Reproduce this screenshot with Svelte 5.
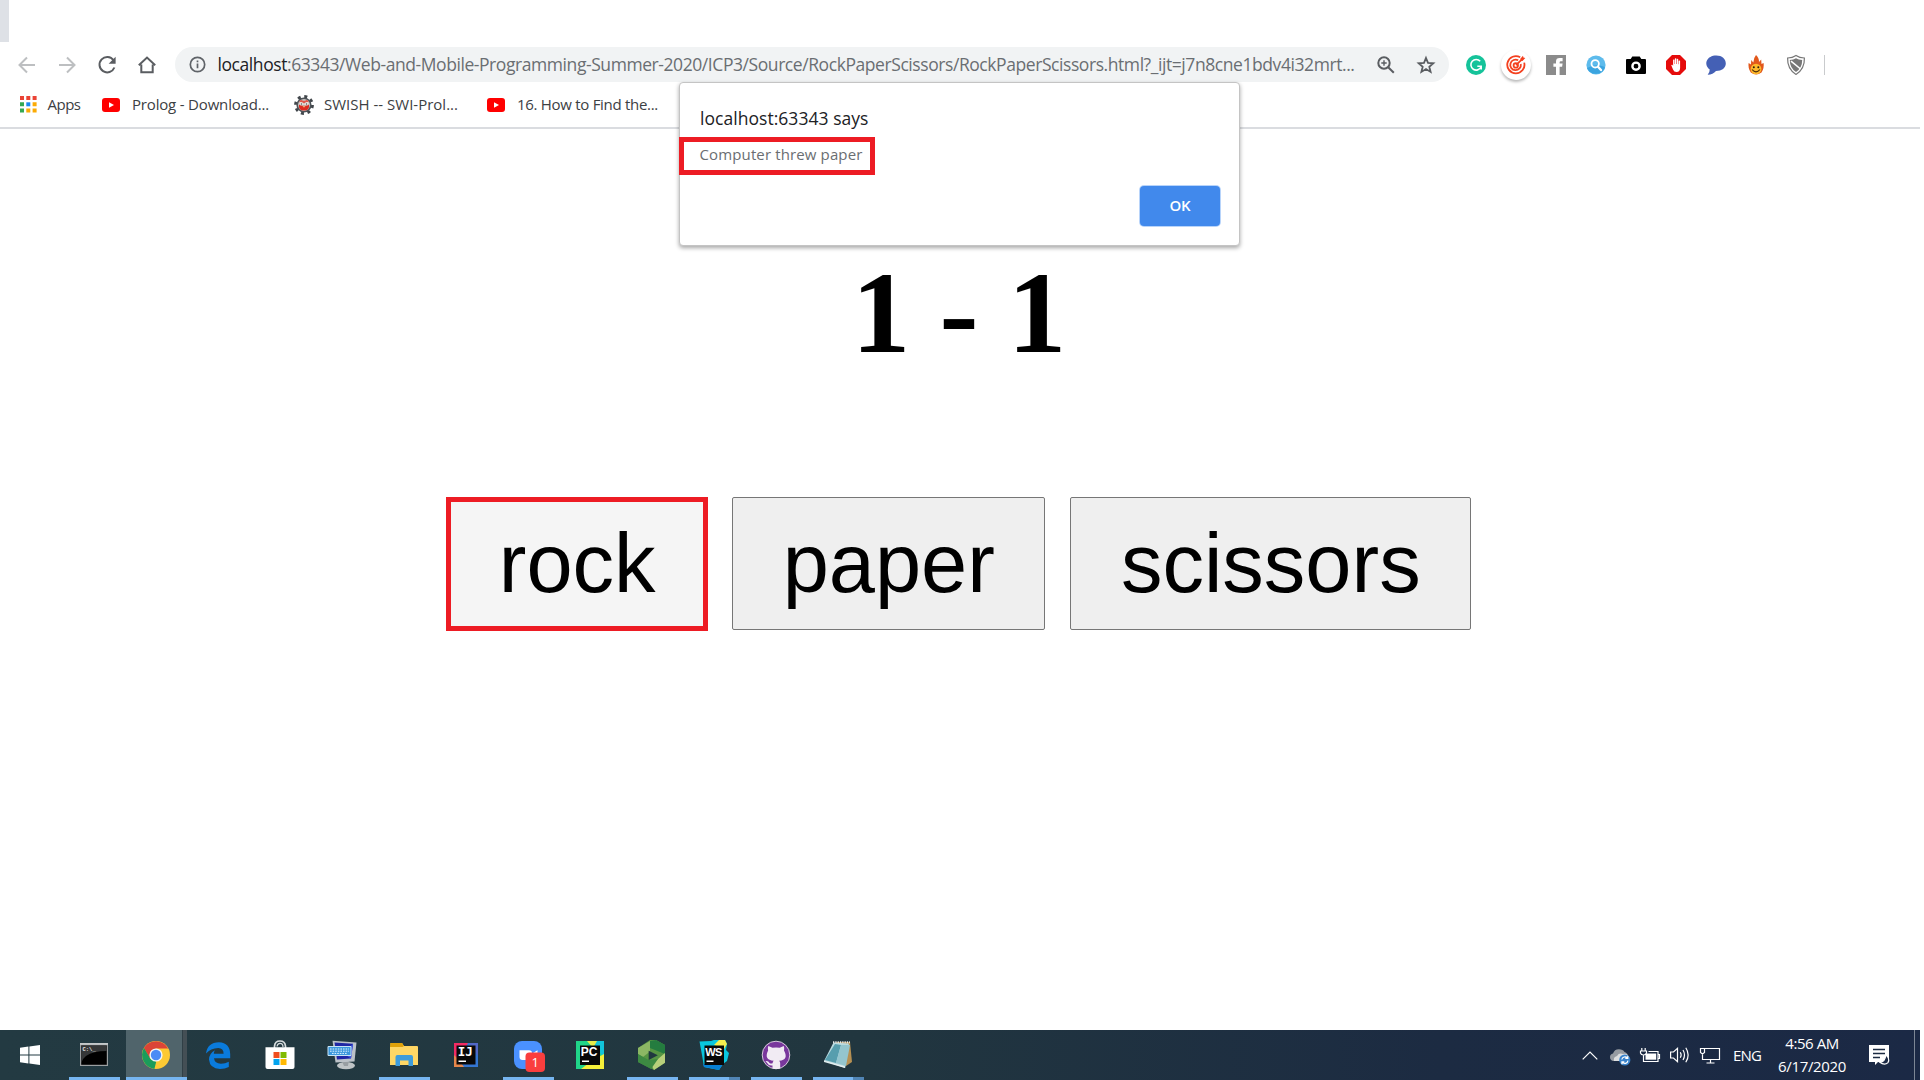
<script>
  const bookmarks = [
    { icon: 'apps', label: 'Apps', width: 33, slot: 82.5, gap: 11 },
    { icon: 'youtube', label: 'Prolog - Download...', width: 137, slot: 192, gap: 12 },
    { icon: 'swish', label: 'SWISH -- SWI-Prol...', width: 134, slot: 193, gap: 10 },
    { icon: 'youtube', label: '16. How to Find the...', width: 141, slot: 191.5, gap: 12 }
  ];
  const extensions = ['grammarly', 'target', 'facebook', 'search', 'camera', 'block', 'chat', 'flame', 'shield'];
  const tasks = [
    { icon: 'cmd', state: 'open' },
    { icon: 'chrome', state: 'active' },
    { icon: 'edge', state: '' },
    { icon: 'store', state: '' },
    { icon: 'remote', state: '' },
    { icon: 'folder', state: 'open' },
    { icon: 'intellij', state: '' },
    { icon: 'zoom', state: 'open' },
    { icon: 'pycharm', state: '' },
    { icon: 'hex', state: 'open' },
    { icon: 'webstorm', state: 'stacked' },
    { icon: 'github', state: 'open' },
    { icon: 'notepad', state: 'stacked' }
  ];

  // Tracks a label out or in so that it fills the given width.
  function fit(node, width) {
    const natural = node.getBoundingClientRect().width;
    const count = node.textContent.length;
    node.style.letterSpacing = `${(width - natural) / count}px`;
  }
</script>

{#snippet extension(name)}
  <svg class="ext" class:raised={name === 'target'} viewBox="0 0 20 20">
    {#if name === 'grammarly'}
      <circle cx="10" cy="10" r="10" fill="#15c39a" />
      <path d="M14.2 6.3A5.3 5.3 0 1 0 15 12M15.2 14.5V11.2H11.3" fill="none" stroke="#fff" stroke-width="1.6" />
    {:else if name === 'target'}
      <g fill="none" stroke="#f4401f" stroke-width="1.8">
        <path d="M14.2 2.3A8.6 8.6 0 1 0 18.2 7.6" />
        <path d="M12.2 5.3A5.3 5.3 0 1 0 14.8 9" />
        <circle cx="9.8" cy="10.4" r="2.2" />
        <path d="M10 10.2L17 3.4" />
      </g>
      <path d="M14.3 3.8L17 .8L17.4 2.6L19.3 3L16.5 6L14.6 5.6Z" fill="#f4401f" />
    {:else if name === 'facebook'}
      <path d="M0 0H20V20H0Z" fill="#8b8b8b" />
      <path d="M10 20V11.8H7.4V8.5H10V6.4Q10 3 13.6 3H16.6V6.2H14.8Q13.6 6.2 13.6 7.4V8.5H16.6L16.1 11.8H13.6V20Z" fill="#fff" />
    {:else if name === 'search'}
      <circle cx="10" cy="10" r="9.6" fill="#5dbbec" />
      <path d="M1 13Q10 8 19 12A9.6 9.6 0 0 1 1 13" fill="#3ba4df" />
      <circle cx="9.2" cy="8.8" r="3.7" fill="none" stroke="#fff" stroke-width="1.8" />
      <path d="M12 11.8L15 15" stroke="#fff" stroke-width="2.4" stroke-linecap="round" />
    {:else if name === 'camera'}
      <path d="M1 4H4.7L6.3 1.5H13.7L15.3 4H19Q20 4 20 5V18Q20 19 19 19H1Q0 19 0 18V5Q0 4 1 4Z" fill="#000" />
      <circle cx="10" cy="11.2" r="3.6" fill="none" stroke="#fff" stroke-width="2.4" />
    {:else if name === 'block'}
      <path d="M6 0H14L20 6V14L14 20H6L0 14V6Z" fill="#e50b0b" />
      <path d="M5.2 10L6.4 9.8L7.1 11V4.8Q7.8 4 8.5 4.8V9H8.9V3.6Q9.7 2.8 10.3 3.6V9H10.8V4Q11.5 3.3 12.2 4V9.3H12.6V5.8Q13.4 5 14.1 5.8V13Q14 17 10.5 17Q8 17 7 14.5Z" fill="#fff" />
    {:else if name === 'chat'}
      <path d="M10.3 .6C16 .6 19.8 4 19.8 8.5S15.8 16 10 16Q7 19.7 1.7 19.8Q3.8 17.6 3.7 14.6C-3 9 1 .6 10.3 .6Z" fill="#4460b5" />
    {:else if name === 'flame'}
      <path d="M10 0Q13.2 3 13 7L15.2 4.5L15.5 9L17.6 8Q18.4 13 15.5 17.5Q10 21.5 4.8 17.5Q1.8 13 2.6 8L5 9.6L5.2 5L7.3 7.5Q7.5 3 10 0Z" fill="#e2581b" />
      <ellipse cx="10" cy="14" rx="5.4" ry="5.2" fill="#fdb92b" />
      <path d="M6 14.5Q10 19.2 14 14.5" fill="none" stroke="#4c2b0b" stroke-width="1.1" />
      <circle cx="7.8" cy="12.2" r="1" fill="#2c1c0c" /><circle cx="12.3" cy="12.2" r="1" fill="#2c1c0c" />
    {:else}
      <path d="M10 .6Q13.5 3 18.4 3Q18.8 14 10 19.4Q1.2 14 1.6 3Q6.5 3 10 .6Z" fill="#fff" stroke="#777" stroke-width="1.2" />
      <path d="M10 3.2Q12.5 4.9 16.2 5Q16.2 12.9 10 17Q3.8 12.9 3.8 5Q7.5 4.9 10 3.2Z" fill="#777" />
      <path d="M5 6.2L14.6 14" stroke="#fff" stroke-width="1.5" />
    {/if}
  </svg>
{/snippet}

{#snippet bookmarkIcon(name)}
  {#if name === 'apps'}
    <svg class="apps" viewBox="0 0 17 17">
      <path d="M0 0h4v4H0zM6.3 0h4v4h-4zM12.6 0h4v4h-4z" fill="#ea4335" />
      <path d="M0 6.3h4v4H0zM0 12.6h4v4H0z" fill="#34a853" />
      <path d="M6.3 6.3h4v4h-4z" fill="#1a88f0" />
      <path d="M12.6 6.3h4v4h-4zM6.3 12.6h4v4h-4zM12.6 12.6h4v4h-4z" fill="#fbab05" />
    </svg>
  {:else if name === 'youtube'}
    <svg class="youtube" viewBox="0 0 18 14">
      <rect width="18" height="14" rx="3" fill="#f00" /><path d="M7 4.2V9.8L12 7Z" fill="#fff" />
    </svg>
  {:else}
    <svg class="gear" viewBox="0 0 20 20">
      <circle cx="10" cy="10" r="8.4" fill="none" stroke="#41464b" stroke-width="3" stroke-dasharray="3 3.6" />
      <circle cx="10" cy="10" r="6.8" fill="#c9c4c2" stroke="#4d5358" stroke-width="1.6" />
      <path d="M5 9.5Q6 11 10 10.8Q14 11 15 9.5Q16 15.4 10 15.6Q4 15.4 5 9.5" fill="#dd2a20" />
      <path d="M5 7.5Q6 4.6 8 5.2Q10 6.4 12 5.2Q14 4.6 15 7.5Q12 6.6 10 8.4Q8 6.6 5 7.5Z" fill="#e0564a" />
      <path d="M5.3 7.6Q7.5 6.8 9.5 8.6L9.2 10.2L6 9.8ZM14.7 7.6Q12.5 6.8 10.5 8.6L10.8 10.2L14 9.8Z" fill="#f5f1eb" />
      <path d="M6.8 9H8.2M11.8 9H13.2" stroke="#222" /><path d="M8.5 11.3H11.5L10 12.6Z" fill="#f6d98b" />
    </svg>
  {/if}
{/snippet}

{#snippet taskIcon(name)}
  <svg class="task-icon" viewBox="0 0 30 30">
    {#if name === 'cmd'}
      <path d="M1 3H29V26H1Z" fill="#9b9fa1" /><path d="M2.2 5.5H27.8V24.8H2.2Z" fill="#000" />
      <path d="M2.2 5.5H27.8V11Q14 11 7 16Q3 19 2.2 23Z" fill="#353738" />
      <path d="M1 3H29V4.8H1Z" fill="#c4c8c9" />
      <text x="3.5" y="11" class="prompt">C:\_</text>
    {:else if name === 'chrome'}
      <circle cx="15" cy="15" r="14" fill="#fdc934" />
      <path d="M2.9 8L9.1 18.4L15.2 21.7L13.4 28.9A14 14 0 0 1 2.9 8Z" fill="#1b9c5b" />
      <path d="M2.9 8A14 14 0 0 1 27.2 8.4H15L9.2 12L9 18.4Z" fill="#db4437" />
      <path d="M2.9 8L9.1 18.6L11 20L4 20Z" fill="#1b9c5b" />
      <circle cx="15" cy="15" r="6.6" fill="#f4f6f7" /><circle cx="15" cy="15" r="5.2" fill="#4b8bf5" />
    {:else if name === 'edge'}
      <path d="M3 13.6Q4.3 2.3 16 2.2Q27 3 27.2 14V18.2H11Q11.6 23.4 18 23.8Q22.3 23.8 25.8 21.8V27Q22 29 17 29Q6.8 28.7 6 19.5Q6 13.6 12 10.2Q10.7 12 10.8 13.8H20.6Q20.6 8.3 15.3 8.1Q7.6 8.2 3 13.6Z" fill="#0a7bdc" />
    {:else if name === 'store'}
      <path d="M9.5 9V6.2Q10 1 15 1T20.5 6.2V9" fill="none" stroke="#d7dcde" stroke-width="1.7" />
      <path d="M12 6.5Q12.5 3.4 15 3.4Q18 3.4 18 7" fill="none" stroke="#d7dcde" stroke-width="1.2" />
      <path d="M.5 7.2H29.5V27Q29.5 29 27.5 29H2.5Q.5 29 .5 27Z" fill="#fff" />
      <path d="M8.5 12H14.5V18H8.5Z" fill="#f04e1f" /><path d="M15.5 12H21.5V18H15.5Z" fill="#80ba01" />
      <path d="M8.5 19H14.5V25H8.5Z" fill="#03a4ef" /><path d="M15.5 19H21.5V25H15.5Z" fill="#ffb902" />
    {:else if name === 'remote'}
      <ellipse cx="19" cy="25.6" rx="9" ry="3.7" fill="#bfc4c6" /><path d="M14 19H22L21 26H17Z" fill="#989ea2" />
      <path d="M5.5 .8L29.5 2.5L27.5 21.5L8.5 22.5Z" fill="#bcc2c8" />
      <path d="M7.5 2.4L26 3.8L24 18.5L10 19.5Z" fill="#2027a5" /><path d="M16 13L26 4L24 18.5Z" fill="#3d55dc" />
      <path d="M1 6.5H24V15.5H1Z" fill="#3b97dd" stroke="#c6e4f6" />
      <path d="M3 9H22M3 11.2H22M5 13.4H20" stroke="#e4f5ff" stroke-dasharray="1.6 1" />
    {:else if name === 'folder'}
      <path d="M1.5 3H13L15 6H28Q29 6 29 7V25H1Z" fill="#ffd45f" /><path d="M1.5 3H13L15 6L13.5 7H1Z" fill="#e0a20a" />
      <path d="M1 7H29V25H1Z" fill="#ffd765" /><path d="M6.5 17Q6.5 15 8.5 15H22Q24 15 24 17V26H19.5V20.5H11V26H6.5Z" fill="#3e9cdb" />
    {:else if name === 'intellij'}
      <path d="M3 3H27V27H3Z" fill="#3476d2" /><path d="M3 3H17L4 25H3Z" fill="#f32b64" /><path d="M3 15L8 20L13 27H3Z" fill="#e7874b" />
      <path d="M18 3H27V16Z" fill="#5268c6" /><path d="M5.5 5.5H24.5V24.5H5.5Z" fill="#090909" />
      <text x="6.7" y="15.7" class="ide serif">IJ</text><path d="M7.5 20.5H15V22H7.5Z" fill="#fff" />
    {:else if name === 'zoom'}
      <rect x="1" y="1" width="28" height="28" rx="8" fill="#4a91ff" />
      <path d="M6.5 10.3H16Q19 10.3 19 13V20H9.5Q6.5 20 6.5 17ZM20 13L24.5 10.3V20L20 17Z" fill="#fff" />
      <rect x="12.5" y="12.5" width="19.5" height="19.5" rx="4" fill="#fa3e3e" /><text x="18.5" y="27.3" class="badge">1</text>
    {:else if name === 'pycharm'}
      <path d="M1 1H29V29H1Z" fill="#20d589" /><path d="M16 1H29V18Z" fill="#12c3da" /><path d="M29 14V29H6L18 20Z" fill="#f5ef3a" /><path d="M12 1H22L18 8Z" fill="#e8ec4b" />
      <path d="M5 5.5H25V25H5Z" fill="#080808" /><text x="5.7" y="16" class="ide">PC</text><path d="M7 20.5H14V22H7Z" fill="#fff" />
    {:else if name === 'hex'}
      <path d="M13 0H19L28 5V22.8L17 30L1 22V8Z" fill="#569543" />
      <path d="M1 8L13 1V11.5L6 17L1 14Z" fill="#8cb764" />
      <path d="M13 1L19 0L28 5V14L13 8Z" fill="#247c3f" />
      <path d="M28 13V22.8L17 30L14 24L21 19Z" fill="#b7cf7b" />
      <path d="M1 14L11.5 20L21 19L14 29L1 22Z" fill="#3d8a42" />
      <path d="M11.7 10.8L20.8 15.2L11.7 20Z" fill="#20383f" />
    {:else if name === 'webstorm'}
      <path d="M.5 1.5L12 1L15 0H26L28 4L27 10L30 13L28 21L24 24L20 30L5 27L3 15Z" fill="#09c7df" />
      <path d="M15 5L20 0H26L28 4L25 9Z" fill="#f5ed4e" /><path d="M4 24L24 24L20 30L5 27Z" fill="#077fd4" />
      <path d="M5.5 5.5H25V25H5.5Z" fill="#080808" /><text x="6.2" y="16" class="ide narrow">WS</text><path d="M7.5 20.5H14.5V22H7.5Z" fill="#fff" />
    {:else if name === 'github'}
      <circle cx="15" cy="15" r="13.8" fill="#79379c" stroke="#d7cbdc" />
      <path d="M7.3 6L11.5 7.8Q15 7.1 18.7 7.8L22.8 6Q23.6 8.3 23 10.5Q28 20 18.2 20.8Q19.2 21.7 19.2 23.5V28.4Q15 29.5 11.5 28.4V25.5Q7.6 26 6 22.7Q5.5 21.8 4.5 21.2Q7 20.3 8.5 23Q9.7 24 11.6 23.2Q11.7 21.6 12.7 20.8Q2.5 20 7.1 10.5Q6.5 8.3 7.3 6Z" fill="#f1ebf3" />
    {:else}
      <path d="M13 2H27L29 22L23 26Z" fill="#b69053" /><path d="M10.5 2.5L26 3.4L22 28L1 21Z" fill="#b8d9df" />
      <path d="M12 4L18 5L13 23L2 20Z" fill="#579eae" /><path d="M18 5L27 5L23 26L13 23Z" fill="#94c5ce" />
      <path d="M1 20.5L22.5 26.5L22 28L1 22Z" fill="#e3eeef" /><path d="M10 2.2H27" stroke="#e5e7e6" stroke-width="2" stroke-dasharray="1.3 1" />
    {/if}
  </svg>
{/snippet}

<div class="screen">
  <header class="browser">
    <div class="tabstrip"><span class="tab-edge"></span></div>
    <div class="toolbar">
      <svg class="nav faded" viewBox="0 0 20 20"><path d="M18 10H3M10 2.5L2.5 10L10 17.5" /></svg>
      <svg class="nav faded" viewBox="0 0 20 20"><path d="M2 10H17M10 2.5L17.5 10L10 17.5" /></svg>
      <svg class="nav" viewBox="0 0 20 20"><path d="M16.5 5.2A7.7 7.7 0 1 0 17.4 12.5" /><path class="solid" d="M18.6 1.8V8.8H11.6Z" /></svg>
      <svg class="nav" viewBox="0 0 20 20"><path d="M4.3 9.5V17.2H15.7V9.5M1.8 10.2L10 2.6L18.2 10.2" /></svg>
      <div class="omnibox">
        <svg class="info" viewBox="0 0 18 18"><circle cx="9" cy="9" r="7.6" /><path d="M9 8V13M9 4.8V6.6" /></svg>
        <span class="url" use:fit={1137}><b>localhost</b>:63343/Web-and-Mobile-Programming-Summer-2020/ICP3/Source/RockPaperScissors/RockPaperScissors.html?_ijt=j7n8cne1bdv4i32mrt...</span>
        <svg class="action" viewBox="0 0 18 18"><circle cx="7" cy="7" r="5.7" /><path d="M11.2 11.2L16.8 16.8" /><path class="thin" d="M7 4.3V9.7M4.3 7H9.7" /></svg>
        <svg class="action star" viewBox="0 0 18 18"><path d="M9 2L11 6.9L16.3 7.3L12.3 10.7L13.6 15.9L9 13.1L4.4 15.9L5.7 10.7L1.7 7.3L7 6.9Z" /></svg>
      </div>
      <div class="extensions">
        {#each extensions as name}{@render extension(name)}{/each}
      </div>
      <span class="divider"></span>
    </div>
    <nav class="bookmarks">
      {#each bookmarks as item}
        <span class="bookmark" style="width: {item.slot}px">
          {@render bookmarkIcon(item.icon)}
          <span class="label" style="margin-left: {item.gap}px" use:fit={item.width}>{item.label}</span>
        </span>
      {/each}
      <span class="hidden-bookmark"></span>
    </nav>
  </header>

  <main>
    <h1>1 - 1</h1>
    <div class="choices">
      <button class="marked">rock</button>
      <button>paper</button>
      <button>scissors</button>
    </div>
  </main>

  <footer class="taskbar">
    <span class="start">
      <svg viewBox="0 0 20 20"><path d="M0 2.8L8.4 1.6V9.4H0ZM9.4 1.4L20 0V9.4H9.4ZM0 10.5H8.4V18.4L0 17.2ZM9.4 10.5H20V20L9.4 18.6Z" /></svg>
    </span>
    {#each tasks as task}
      <span class="task {task.state}">{@render taskIcon(task.icon)}</span>
    {/each}
    <div class="tray">
      <svg class="chevron" viewBox="0 0 16 9"><path d="M.7 8.3L8 1L15.3 8.3" /></svg>
      <svg class="cloud" viewBox="0 0 20 18">
        <path class="grey" d="M3 13Q0 12 0 9Q0 6 3 5.5Q4.5 1 9 1.2Q13 1.2 14.5 4Q18 5 18 9L12 13Z" /><path class="light" d="M4 13Q3 9 7 8Q9 4.5 13 6Q18 5 18 9V13Z" />
        <circle cx="14.8" cy="12" r="5.6" fill="#3983cc" />
        <path class="sync" d="M11.8 11.5A3.2 3.2 0 0 1 17.4 10M17.8 7.7V10.4H15.3M17.9 12.6A3.2 3.2 0 0 1 12.2 14.2M11.9 16.3V13.8H14.3" />
      </svg>
      <svg class="battery" viewBox="0 0 20 15"><path d="M1.8 0V3M5.2 0V3M.5 3H6.5V5Q6 7 3.5 7T.5 5ZM3.5 7V13.5H18V3.5H8.5M18 6.5H19.5V10.5H18" /><path class="white" d="M5.5 5.5H16.2V11.7H5.5Z" /></svg>
      <svg class="speaker" viewBox="0 0 20 18"><path d="M.6 6H3.5L7.5 2.3V15.7L3.5 12H.6ZM10.3 6.3Q12 9 10.3 11.7M13 4Q16 9 13 14M15.8 1.7Q20.5 9 15.8 16.3" /></svg>
      <svg class="network" viewBox="0 0 20 17"><path d="M5 1.5H19.5V12.5H2.5V7M10.5 12.5V16M6.5 16H14.5M.5 1.5H4.5V5.5L2.5 7L.5 5.5Z" /></svg>
      <span class="lang"><span use:fit={28}>ENG</span></span>
      <div class="clock"><span use:fit={53.5}>4:56 AM</span><span use:fit={68}>6/17/2020</span></div>
      <svg class="notice" viewBox="0 0 21 21">
        <path class="white" d="M0 0H20V17H9L6 20V17H0Z" /><path class="lines" d="M4 4.5H16M4 8.5H16M4 12.5H11" />
        <path class="moon" d="M16.8 10Q21.2 13.3 19 17.6Q15.5 21 10.8 17.3Q16.2 17 16.8 10Z" />
      </svg>
      <span class="show-desktop"></span>
    </div>
  </footer>

  <section class="dialog">
    <div class="origin"><span use:fit={168.5}>localhost:63343 says</span></div>
    <div class="message"><span use:fit={163}>Computer threw paper</span></div>
    <div class="ok"><span use:fit={21}>OK</span></div>
  </section>
</div>

<style>
  :global(body) { margin: 0; background: #fff; }
  .screen { position: relative; display: flex; flex-direction: column; width: 1920px; height: 1080px; overflow: hidden; background: #fff; font-family: 'Open Sans', 'Noto Sans', sans-serif; }
  svg { display: block; flex: none; overflow: visible; }
  span { white-space: nowrap; }
  .browser { height: 127px; border-bottom: 2px solid #dadce0; }
  .tabstrip { display: flex; height: 47px; }
  .tab-edge { width: 9px; height: 42px; background: #dee1e6; }
  .toolbar { display: flex; align-items: center; height: 35px; padding-left: 17px; }
  .nav { width: 20px; height: 20px; margin-right: 20px; fill: none; stroke: #5a5d61; stroke-width: 2; }
  .nav.faded { stroke: #bdbfc1; }
  .nav .solid { fill: #5a5d61; stroke: none; }
  .omnibox { display: flex; align-items: center; box-sizing: border-box; width: 1274px; height: 35px; margin-left: -2px; padding-left: 14px; border-radius: 18px; background: #f1f3f4; }
  .info { width: 17px; height: 17px; margin-right: 11.5px; fill: none; stroke: #5f6368; stroke-width: 1.8; }
  .url { color: #6a6e72; font-size: 17.5px; line-height: 35px; }
  .url b { color: #202124; font-weight: 400; }
  .action { width: 18px; height: 18px; margin-left: 22px; fill: none; stroke: #5a5d61; stroke-width: 2; }
  .action .thin { stroke-width: 1.4; }
  .star { stroke-width: 1.8; }
  .extensions { display: flex; gap: 20px; margin-left: 17px; }
  .ext { width: 20px; height: 20px; }
  .raised { border-radius: 50%; background: #fff; box-shadow: 0 0 0 5px #fff, 0 2px 3px 5px #b8b8b8; }
  .divider { width: 1px; height: 20px; margin-left: 17.5px; background: #c9cbcd; }
  .bookmarks { display: flex; align-items: center; height: 45px; padding-left: 19.5px; }
  .bookmark { display: flex; flex: none; align-items: center; }
  .label { color: #3c4043; font-size: 15px; line-height: 20px; padding-bottom: 2px; }
  .apps { width: 17px; height: 17px; }
  .youtube { width: 18px; height: 14px; }
  .gear { width: 20px; height: 20px; }
  .hidden-bookmark { width: 6px; height: 12px; background: #d9843b; }
  main { display: flex; flex: 1; flex-direction: column; align-items: center; padding-top: 119px; }
  h1 { margin: 0 0 119px -2px; font: bold 117px/130px 'Liberation Serif', serif; color: #000; }
  .choices { display: flex; gap: 25px; margin-left: -2.5px; }
  button { box-sizing: border-box; height: 133px; padding: 0 49.5px; border: 1px solid #767676; border-radius: 2px; background: #efefef; color: #000; font: 83px/131px 'Liberation Sans', sans-serif; }
  .marked { height: 134px; margin-right: -1px; padding: 0 47.5px; border: 5px solid #ed1c24; border-radius: 0; background: #f5f5f5; line-height: 122px; }
  .taskbar { display: flex; height: 50px; background: linear-gradient(90deg, #233a42 0%, #21363f 45%, #1c2b42 75%, #1b2945 100%); }
  .start { display: flex; align-items: center; justify-content: center; width: 60px; margin-right: 2px; }
  .start svg { width: 20px; height: 20px; fill: #fff; }
  .task { display: flex; align-items: center; justify-content: center; box-sizing: border-box; width: 62px; height: 50px; padding-left: 1.5px; background: linear-gradient(#76b5f0, #76b5f0) no-repeat 7px 47px / 0 3px; }
  .task-icon { width: 30px; height: 30px; }
  .task.open { background-size: 51px 3px; }
  .task.stacked { background: linear-gradient(90deg, #76b5f0 40px, #5185b5 40px) no-repeat 7px 47px / 51px 3px; }
  .task.active { width: 63px; margin-right: -1px; padding-right: 1px; background: linear-gradient(#76b5f0, #76b5f0) no-repeat 2px 47px / 61px 3px, linear-gradient(90deg, transparent 2px, #50646b 2px 58px, #303f46 58px 59px, #444f55 59px) no-repeat; }
  .prompt { fill: #e8e8e8; font: bold 5.5px 'Liberation Mono', monospace; }
  .ide { fill: #fff; font: bold 12px 'Liberation Sans', sans-serif; }
  .ide.serif { font: bold 12.5px 'DejaVu Sans Mono', monospace; }
  .ide.narrow { font-size: 11px; letter-spacing: -0.5px; }
  .badge { fill: #fff; font: 13px 'Open Sans', sans-serif; }
  .tray { display: flex; align-items: center; margin-left: auto; color: #fff; }
  .tray svg { fill: none; stroke: #fff; stroke-width: 1.2; }
  .tray .white { fill: #fff; stroke: none; }
  .tray circle, .tray .grey, .tray .light { stroke: none; }
  .tray .grey { fill: #969ba1; }
  .tray .light { fill: #dcdedf; }
  .chevron { width: 16px; height: 9px; margin-right: 12px; }
  .cloud { width: 20px; height: 18px; margin: 3px 10px 0 0; }
  .battery { width: 20px; height: 15px; margin-right: 10px; }
  .speaker { width: 20px; height: 18px; margin-right: 10px; }
  .network { width: 20px; height: 17px; margin-right: 13px; }
  .lang { width: 30px; font-size: 15px; }
  .clock { display: flex; flex-direction: column; align-items: center; width: 68px; margin: 0 23px 0 15px; font-size: 15px; line-height: 23px; }
  .notice { width: 21px; height: 21px; margin-right: 24px; }
  .tray .lines { stroke: #1c2b42; stroke-width: 1.3; }
  .tray .moon { fill: #1b2945; stroke: #fff; }
  .show-desktop { width: 1px; height: 50px; margin-right: 5px; background: #7c8694; }
  .dialog { position: absolute; top: 82px; left: 679px; box-sizing: border-box; width: 561px; height: 164px; border: 1px solid #c4c4c4; border-radius: 4px; background: #fff; box-shadow: 0 2px 4px rgba(0, 0, 0, 0.35); }
  .origin { height: 54px; padding-left: 20px; color: #202124; font-size: 17.5px; line-height: 71px; }
  .message { box-sizing: border-box; width: 196px; height: 38px; margin-left: -1px; padding-left: 15.5px; border: 5px solid #ed1c24; color: #6a6e72; font-size: 15px; line-height: 24px; }
  .ok { box-sizing: border-box; width: 80px; height: 40px; margin: 11px 19px 0 auto; border-radius: 4px; background: #4189ec; box-shadow: 0 0 0 1px #b8d4fa; color: #fff; font-size: 15px; font-weight: 600; line-height: 38px; text-align: center; }
</style>
